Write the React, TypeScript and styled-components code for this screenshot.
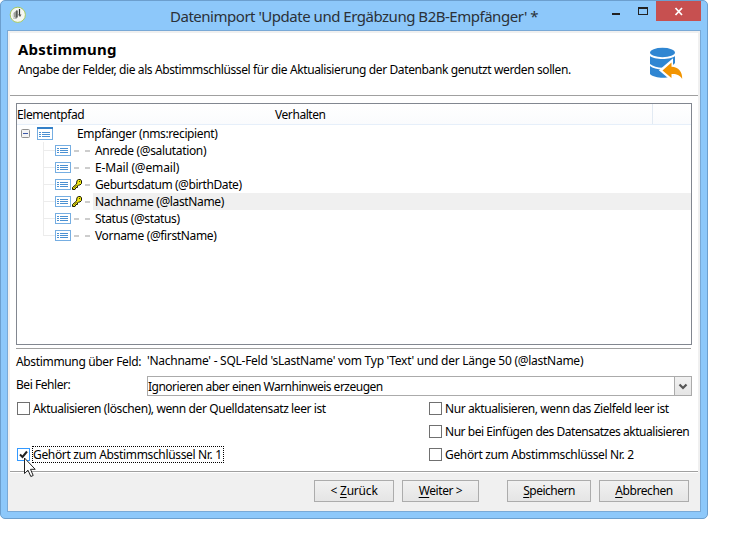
import React from "react";
import styled, { createGlobalStyle } from "styled-components";

const GlobalStyle = createGlobalStyle`
  * { box-sizing: border-box; }
  body { margin: 0; background: #fff; overflow: hidden; }
`;

const Desktop = styled.div`
  position: relative;
  width: 737px;
  height: 548px;
  background: #fff;
  font: 12px/17px "Noto Sans", "Open Sans", sans-serif;
  color: #000;
`;

const Window = styled.div`
  width: 708px;
  height: 519px;
  display: flex;
  flex-direction: column;
  padding: 0 6px 6px;
  border: 1px solid #6c9fce;
  border-radius: 5px;
  background: #8dc8fa;
`;

const TitleBar = styled.header`
  height: 29px;
  flex: none;
  display: flex;
  align-items: flex-start;
`;

const AppIcon = styled.svg`
  flex: none;
  margin: 5px 0 0 2px;
`;

const Title = styled.h1`
  flex: 1;
  margin: 0;
  padding: 3px 0 0 144px;
  font-size: 15px;
  line-height: 24px;
  font-weight: 400;
  color: #2b3138;
`;

const Caption = styled.div`
  display: flex;
  flex: none;
`;

const CaptionButton = styled.button<{ $w: number; $close?: boolean }>`
  width: ${(p) => p.$w}px;
  height: 20px;
  padding: 0;
  border: 0;
  display: block;
  background: ${(p) => (p.$close ? "#c75050" : "transparent")};
  svg { display: block; }
`;

const Client = styled.div`
  flex: 1;
  display: flex;
  flex-direction: column;
  padding: 2px 2px 0;
  border: 1px solid #79a9d6;
  background: #f0f0f0;
`;

const Page = styled.main`
  height: 439px;
  width: 688px;
  background: #fff;
  border-bottom: 1px solid #a0a0a0;
`;

const Heading = styled.section`
  height: 63px;
  display: flex;
  justify-content: space-between;
  padding: 6px 13px 0 8px;
  border-bottom: 1px solid #a0a0a0;
`;

const HeadingTitle = styled.h2`
  margin: 0;
  font-size: 15px;
  line-height: 20px;
  font-weight: 700;
`;

const Text = styled.span<{ $ls?: number }>`
  display: inline-block;
  white-space: pre;
  letter-spacing: ${(p) => p.$ls ?? 0}px;
`;

const HeadingNote = styled.p`
  margin: 2px 0 0;
  line-height: 17px;
`;

const HeadingIcon = styled.svg`
  margin-top: 8px;
`;

const Tree = styled.section`
  width: 676px;
  height: 242px;
  margin: 7px 0 0 6px;
  border: 1px solid #828790;
`;

const TreeHeader = styled.div`
  height: 21px;
  display: grid;
  grid-template-columns: 258px 378px 1fr;
  line-height: 22px;
  border-bottom: 1px solid #e6effa;
  background: linear-gradient(#fff, #fafbfd);
`;

const HeaderCell = styled.div`
  height: 20px;
  &:nth-child(2) { border-right: 1px solid #e2eaf3; }
`;

const Row = styled.div`
  height: 17px;
  display: flex;
`;

const RowIcon = styled.svg`
  flex: none;
  display: block;
`;

const RowLabel = styled.div<{ $selected?: boolean }>`
  flex: 1;
  padding-left: 2px;
  line-height: 17px;
  background: ${(p) => (p.$selected ? "#f0f0f0" : "transparent")};
`;

const Form = styled.section`
  width: 675px;
  margin: 3px 0 0 6px;
  border-top: 1px solid #a0a0a0;
`;

const Field = styled.div<{ $h: number; $top: number }>`
  height: ${(p) => p.$h}px;
  padding-top: ${(p) => p.$top}px;
  display: grid;
  grid-template-columns: 131px 545px;
`;

const Value = styled.div`
  margin-top: -1px;
`;

const Combo = styled.div`
  height: 20px;
  display: flex;
  justify-content: space-between;
  border: 1px solid #ababab;
  line-height: 19px;
`;

const ComboArrow = styled.div`
  width: 17px;
  border-left: 1px solid #ababab;
  background: linear-gradient(#f1f1f1, #e5e5e5);
  svg { display: block; }
`;

const Checks = styled.div`
  display: grid;
  grid-template-columns: 412px 1fr;
  grid-auto-rows: 23px;
  padding: 0 0 0 1px;
`;

const Check = styled.label`
  height: 17px;
  display: flex;
  align-items: center;
`;

const Box = styled.span<{ $active?: boolean }>`
  width: 13px;
  height: 13px;
  flex: none;
  margin-right: 2px;
  border: 1px solid ${(p) => (p.$active ? "#3399ff" : "#707070")};
  background: #fff;
  svg { display: block; }
`;

const CheckText = styled.span<{ $focused?: boolean }>`
  height: 17px;
  padding: 0 1px 0 0;
  line-height: 15px;
  white-space: nowrap;
  border: 1px ${(p) => (p.$focused ? "dotted #000" : "solid transparent")};
`;

const Footer = styled.footer`
  width: 688px;
  height: 39px;
  display: flex;
  justify-content: flex-end;
  padding: 7px 9px 0 0;
  border-top: 1px solid #fff;
`;

const Button = styled.button<{ $w: number; $gap?: number }>`
  width: ${(p) => p.$w}px;
  height: 22px;
  margin-left: ${(p) => p.$gap ?? 8}px;
  padding: 0;
  border: 1px solid #acacac;
  background: linear-gradient(#f1f1f1, #e5e5e5);
  font: inherit;
  line-height: 20px;
  color: #000;
  u { text-underline-offset: 2px; text-decoration-skip-ink: none; }
`;

const Cursor = styled.svg`
  position: absolute;
  left: 24px;
  top: 457px;
`;

const items = [
  { text: "Anrede (@salutation)", ls: -0.34 },
  { text: "E-Mail (@email)", ls: -0.15 },
  { text: "Geburtsdatum (@birthDate)", ls: -0.43, keyed: true },
  { text: "Nachname (@lastName)", ls: -0.35, keyed: true, selected: true },
  { text: "Status (@status)", ls: -0.37 },
  { text: "Vorname (@firstName)", ls: -0.35 },
];

function FieldGlyph({ x, y, root }: { x: number; y: number; root?: boolean }) {
  const h = root ? 13 : 11;
  return (
    <g transform={`translate(${x} ${y})`} shapeRendering="crispEdges">
      <rect x=".5" y=".5" width="15" height={h - 1} fill="#fff" stroke="#76aee2" />
      {root && <path d="M0 0h16v2H0z" fill="#3480c8" />}
      <g transform={`translate(0 ${root ? 2 : 0})`}>
        <path d="M2 3h2v1H2zM2 5h2v1H2zM2 7h2v1H2zM5 3h8v1H5zM5 5h8v1H5zM5 7h8v1H5z" fill="#4a90d2" />
      </g>
    </g>
  );
}

function KeyGlyph() {
  return (
    <g transform="translate(55 3)">
      <path d="M5 1.500 6.500.5h2L9.500 2v2.500L8 6H6.500L5.500 7v1.500H4L3 10.500H.5v-2L4.500 5z" fill="#f0e614" stroke="#1c1c00" />
      <path d="M7 2.500h1" stroke="#403a00" />
      <path d="M1.500 9.500 5 6" stroke="#7f7800" strokeWidth=".8" />
    </g>
  );
}

function ItemIcons({ keyed, last }: { keyed?: boolean; last: boolean }) {
  return (
    <RowIcon width="76" height="17">
      <path d={`M26.500 0V${last ? 9 : 17}M26 8.500H38`} stroke="#ececec" fill="none" />
      <FieldGlyph x={38} y={3} />
      {keyed ? <KeyGlyph /> : <path d="M57 9h5" stroke="#bdbdbd" strokeWidth="1.500" />}
      <path d="M68 9h5" stroke="#bdbdbd" strokeWidth="1.500" />
    </RowIcon>
  );
}

export default function App() {
  return (
    <>
      <GlobalStyle />
      <Desktop>
        <Window>
          <TitleBar>
            <AppIcon width="17" height="17" viewBox="0 0 17 17">
              <circle cx="8.800" cy="8.800" r="7.600" fill="#f6f7f2" stroke="#a6c95f" />
              <path d="M4.500 7 8 4v8.500L4.500 13z" fill="#9b9e99" />
              <path d="M4 8.500c0 2 1 3.500 2 3.500" fill="none" stroke="#d5d7d2" strokeWidth="1.300" />
              <path d="M8 4.500v7M10.500 3v6" stroke="#30332f" strokeWidth="1.200" />
              <path d="M9 8.500h3.500L11 11z" fill="#555853" />
            </AppIcon>
            <Title><Text $ls={-0.48}>Datenimport 'Update und Ergäbzung B2B-Empfänger' *</Text></Title>
            <Caption>
              <CaptionButton $w={27} aria-label="Minimieren">
                <svg width="27" height="20"><path d="M10 12h8v2h-8z" fill="#222" /></svg>
              </CaptionButton>
              <CaptionButton $w={27} aria-label="Maximieren">
                <svg width="27" height="20" shapeRendering="crispEdges"><path d="M9 6h10v8H9zM10 8v5h8V8z" fillRule="evenodd" fill="#222" /></svg>
              </CaptionButton>
              <CaptionButton $w={45} $close aria-label="Schließen">
                <svg width="45" height="20"><path d="M19.500 7 26 14M26 7l-6.500 7" stroke="#fff" strokeWidth="1.700" /></svg>
              </CaptionButton>
            </Caption>
          </TitleBar>
          <Client>
            <Page>
              <Heading>
                <div>
                  <HeadingTitle><Text $ls={0.2}>Abstimmung</Text></HeadingTitle>
                  <HeadingNote><Text $ls={-0.385}>Angabe der Felder, die als Abstimmschlüssel für die Aktualisierung der Datenbank genutzt werden sollen.</Text></HeadingNote>
                </div>
                <HeadingIcon width="36" height="34" viewBox="0 0 36 34">
                  <ellipse cx="13.500" cy="5.500" rx="12.500" ry="4.700" fill="#2f86d2" />
                  <path d="M1 9c4 4 21 4 25 0v7C22 22 7 22 1 17z" fill="#2f86d2" />
                  <path d="M1 19c5 4.500 20 4.500 25 0v8c-4 5-20 5-25 0z" fill="#2f86d2" />
                  <path d="M22.500 14.500v4.800c7 .2 11 5 10.700 14.200-2.200-4.500-5-6.700-10.700-6.500v5L12.200 23.300z" fill="#f29400" stroke="#fff" strokeWidth="3" />
                  <path d="M22.500 15.500v4.300c7 .2 11 5 10.700 12.200-2.200-3.500-5-5.200-10.700-5v4L13.500 23.500z" fill="#f29400" />
                </HeadingIcon>
              </Heading>
              <Tree>
                <TreeHeader>
                  <HeaderCell><Text $ls={-0.43}>Elementpfad</Text></HeaderCell>
                  <HeaderCell><Text $ls={-0.43}>Verhalten</Text></HeaderCell>
                </TreeHeader>
                <Row>
                  <RowIcon width="58" height="17">
                    <rect x="4.500" y="4.500" width="8" height="8" rx="1" fill="#f4f4f4" stroke="#919191" />
                    <path d="M6 8.500h5" stroke="#3c58a8" />
                    <FieldGlyph x={20} y={2} root />
                  </RowIcon>
                  <RowLabel><Text $ls={-0.38}>Empfänger (nms:recipient)</Text></RowLabel>
                </Row>
                {items.map((it, i) => (
                  <Row key={it.text}>
                    <ItemIcons keyed={it.keyed} last={i === items.length - 1} />
                    <RowLabel $selected={it.selected}><Text $ls={it.ls}>{it.text}</Text></RowLabel>
                  </Row>
                ))}
              </Tree>
              <Form>
                <Field $h={27} $top={4}>
                  <Text $ls={-0.34}>Abstimmung über Feld:</Text>
                  <Value><Text $ls={-0.265}>'Nachname' - SQL-Feld 'sLastName' vom Typ 'Text' und der Länge 50 (@lastName)</Text></Value>
                </Field>
                <Field $h={24} $top={0}>
                  <Text $ls={-0.45}>Bei Fehler:</Text>
                  <Combo>
                    <Text $ls={-0.5}>Ignorieren aber einen Warnhinweis erzeugen</Text>
                    <ComboArrow>
                      <svg width="16" height="18"><path d="m4.500 7.500 3.500 3.500 3.500-3.500" fill="none" stroke="#555" strokeWidth="2.200" /></svg>
                    </ComboArrow>
                  </Combo>
                </Field>
                <Checks>
                  <Check><Box /><CheckText><Text $ls={-0.4}>Aktualisieren (löschen), wenn der Quelldatensatz leer ist</Text></CheckText></Check>
                  <Check><Box /><CheckText><Text $ls={-0.42}>Nur aktualisieren, wenn das Zielfeld leer ist</Text></CheckText></Check>
                  <span />
                  <Check><Box /><CheckText><Text $ls={-0.47}>Nur bei Einfügen des Datensatzes aktualisieren</Text></CheckText></Check>
                  <Check>
                    <Box $active>
                      <svg width="11" height="11"><path d="M2 5.500 4.500 8 9 2.500" fill="none" stroke="#222" strokeWidth="2" /></svg>
                    </Box>
                    <CheckText $focused><Text $ls={-0.34}>Gehört zum Abstimmschlüssel Nr. 1</Text></CheckText>
                  </Check>
                  <Check><Box /><CheckText><Text $ls={-0.34}>Gehört zum Abstimmschlüssel Nr. 2</Text></CheckText></Check>
                </Checks>
              </Form>
            </Page>
            <Footer>
              <Button $w={80}><Text $ls={-0.2}>{"< "}<u>Z</u>urück</Text></Button>
              <Button $w={77}><Text $ls={-0.4}><u>W</u>eiter &gt;</Text></Button>
              <Button $w={84} $gap={28}><Text $ls={-0.5}><u>S</u>peichern</Text></Button>
              <Button $w={90}><Text $ls={-0.4}><u>A</u>bbrechen</Text></Button>
            </Footer>
          </Client>
        </Window>
        <Cursor width="13" height="21" viewBox="0 0 13 21">
          <path d="M.5 1v15.500l3.500-3.300 2.800 6.300 2.400-1-2.700-6.200h4.700z" fill="#fff" stroke="#222" />
        </Cursor>
      </Desktop>
    </>
  );
}
